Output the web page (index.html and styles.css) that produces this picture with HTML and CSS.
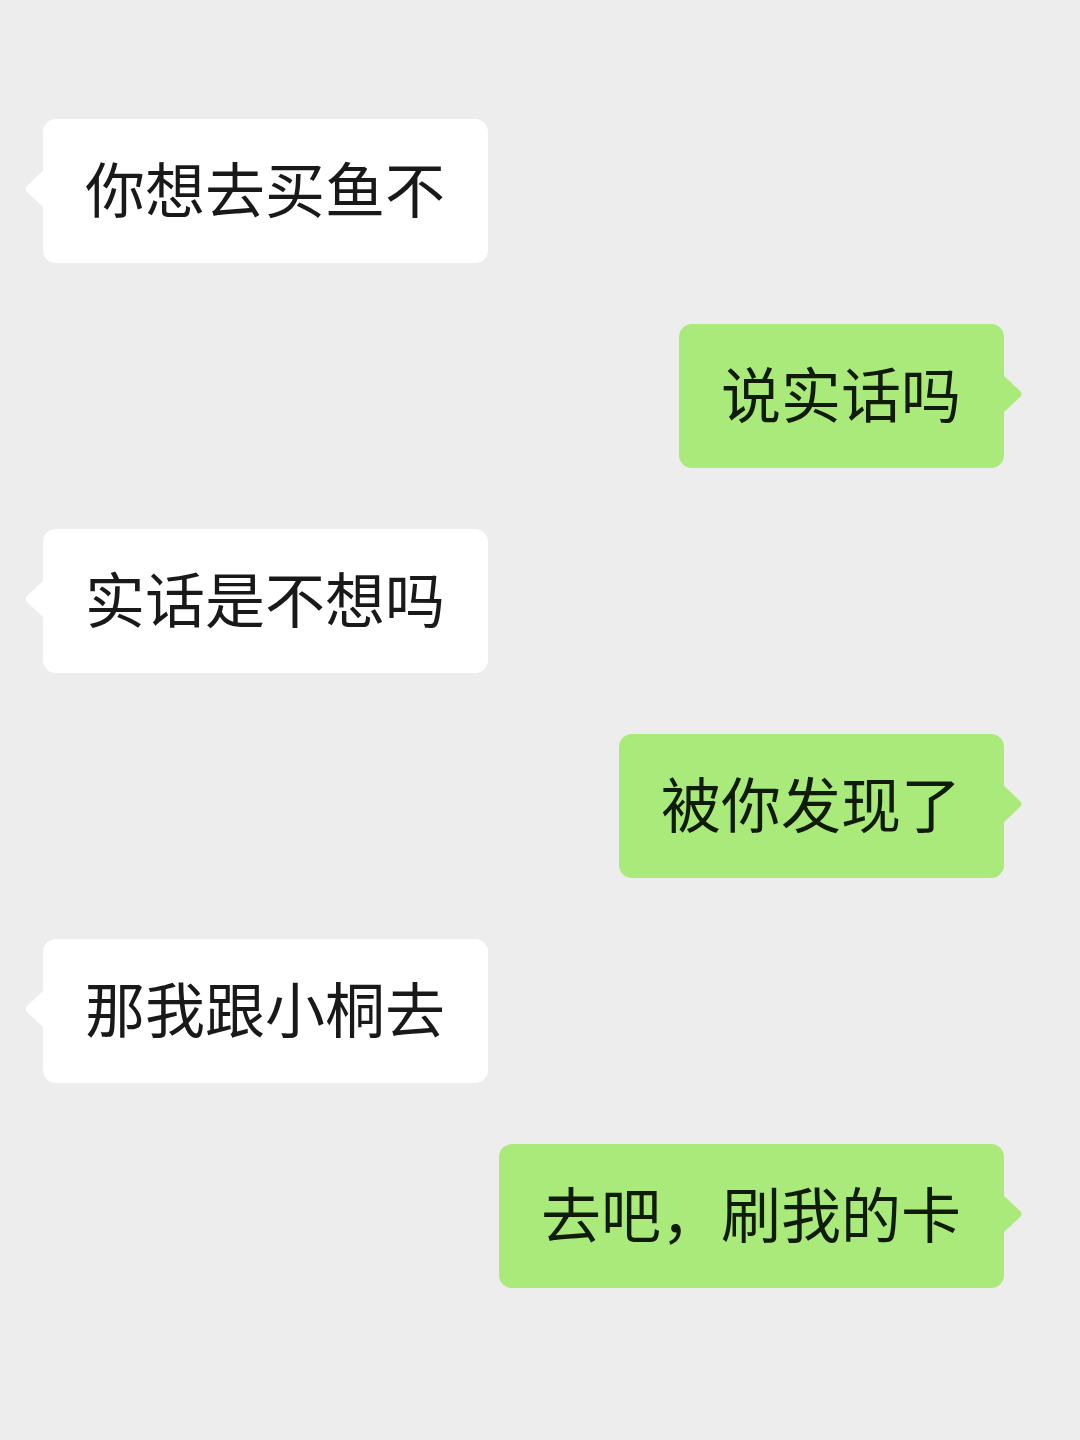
FILE: index.html
```html
<!DOCTYPE html>
<html lang="zh-CN">
<head>
<meta charset="utf-8">
<meta name="viewport" content="width=device-width, initial-scale=1">
<title>聊天</title>
<link rel="stylesheet" href="styles.css">
</head>
<body>
<main class="chat">
  <p class="bubble received">你想去买鱼不<svg class="tail" viewBox="0 0 20 40" aria-hidden="true"><path d="M20 0 3 16Q0 19 3 22L20 38Z"/></svg></p>
  <p class="bubble sent">说实话吗<svg class="tail" viewBox="0 0 20 40" aria-hidden="true"><path d="M0 0 17 16Q20 19 17 22L0 38Z"/></svg></p>
  <p class="bubble received">实话是不想吗<svg class="tail" viewBox="0 0 20 40" aria-hidden="true"><path d="M20 0 3 16Q0 19 3 22L20 38Z"/></svg></p>
  <p class="bubble sent">被你发现了<svg class="tail" viewBox="0 0 20 40" aria-hidden="true"><path d="M0 0 17 16Q20 19 17 22L0 38Z"/></svg></p>
  <p class="bubble received">那我跟小桐去<svg class="tail" viewBox="0 0 20 40" aria-hidden="true"><path d="M20 0 3 16Q0 19 3 22L20 38Z"/></svg></p>
  <p class="bubble sent">去吧，刷我的卡<svg class="tail" viewBox="0 0 20 40" aria-hidden="true"><path d="M0 0 17 16Q20 19 17 22L0 38Z"/></svg></p>
</main>
</body>
</html>
```
FILE: styles.css
```css
body {
  margin: 0;
  background: #ededed;
  color: #191919;
  font-family: "Noto Sans CJK SC", sans-serif;
}

.chat {
  display: flex;
  flex-direction: column;
  gap: 61px;
  min-height: 100vh;
  box-sizing: border-box;
  padding: 119px 76px 119px 43px;
}

.bubble {
  position: relative;
  margin: 0;
  padding: 26px 43px 34px 42px;
  border-radius: 13px;
  font-size: 60px;
  line-height: 84px;
}

.received {
  align-self: flex-start;
  background: #fff;
  fill: #fff;
}

.sent {
  align-self: flex-end;
  background: #a9ea7a;
  color: #111c08;
  fill: #a9ea7a;
}

.tail {
  position: absolute;
  top: 51px;
  width: 20px;
  height: 40px;
}

.received .tail {
  left: -19px;
}

.sent .tail {
  right: -19px;
}
```
